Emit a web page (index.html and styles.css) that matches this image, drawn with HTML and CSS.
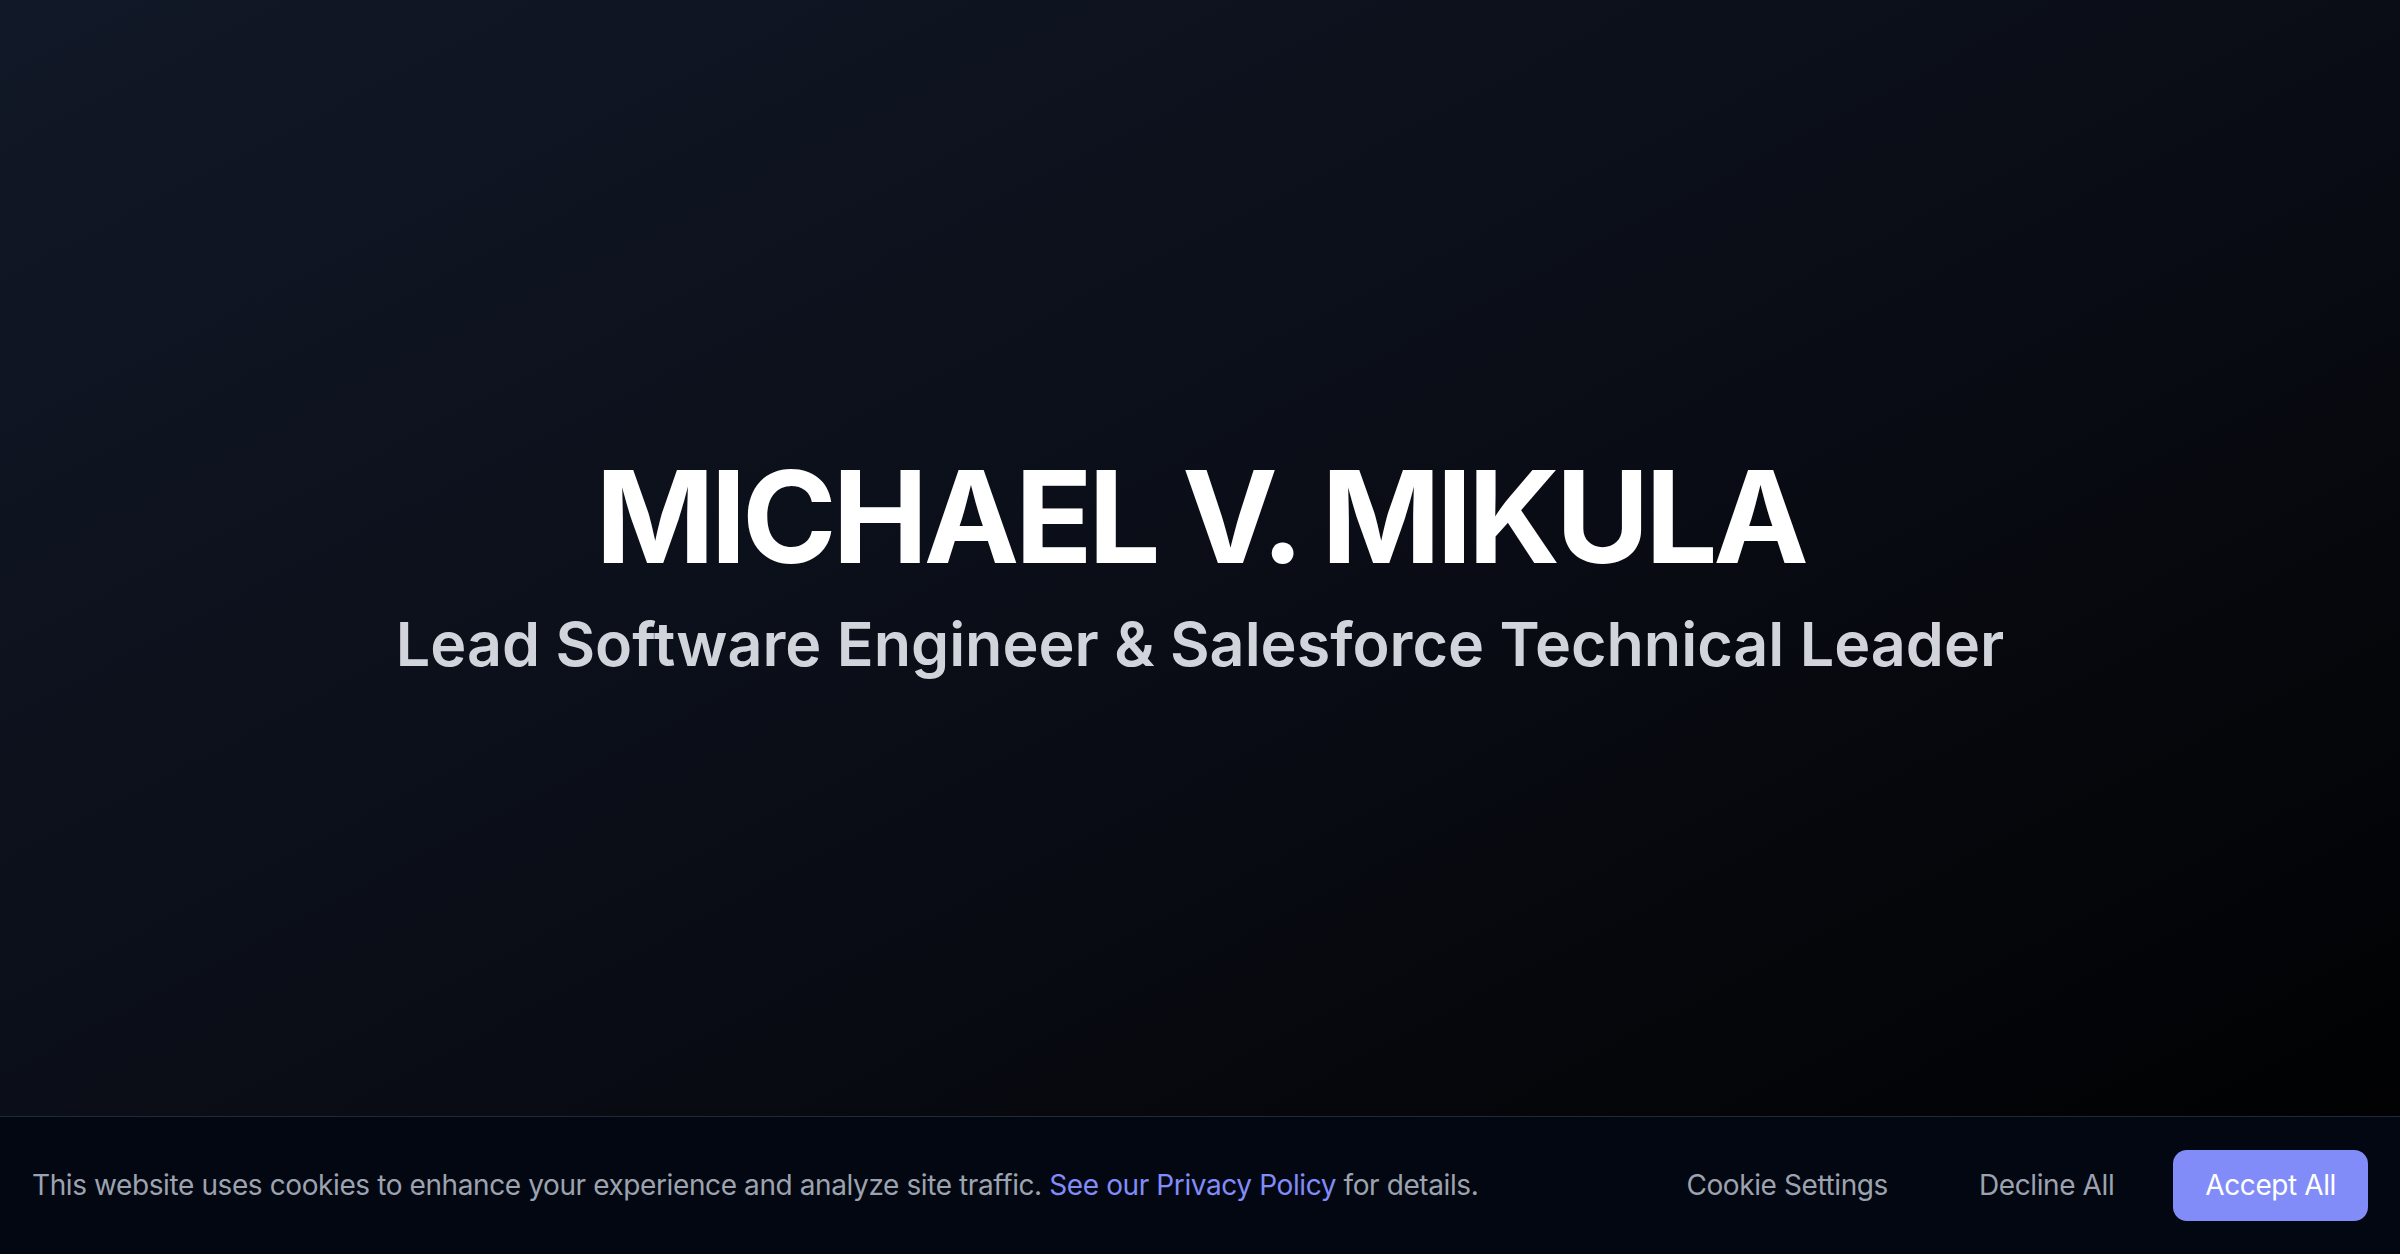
FILE: index.html
```html
<!DOCTYPE html>
<html lang="en">
<head>
<meta charset="utf-8">
<title>Michael V. Mikula</title>
<link rel="stylesheet" href="styles.css">
</head>
<body>
<main class="hero">
  <div class="hero-content">
    <h1 class="hero-title">MICHAEL V. MIKULA</h1>
    <p class="hero-subtitle">Lead Software Engineer &amp; Salesforce Technical Leader</p>
  </div>
</main>
<div class="cookie-banner">
  <p class="cookie-text">This website uses cookies to enhance your experience and analyze site traffic. <a href="#" class="cookie-link">See our Privacy Policy</a> for details.</p>
  <div class="cookie-actions">
    <button class="btn btn-ghost">Cookie Settings</button>
    <button class="btn btn-ghost">Decline All</button>
    <button class="btn btn-primary">Accept All</button>
  </div>
</div>
</body>
</html>
```
FILE: styles.css
```css
* { box-sizing: border-box; }
html, body {
  margin: 0;
  padding: 0;
  height: 100%;
}
body {
  font-family: Inter, "Noto Sans", "Liberation Sans", sans-serif;
  background: #000;
  color: #fff;
  overflow: hidden;
}
.hero {
  height: 100vh;
  display: flex;
  align-items: center;
  justify-content: center;
  padding-bottom: 127px;
  background: linear-gradient(to bottom right, #111827 0%, #0a0d16 50%, #000000 100%);
}
.hero-content {
  display: flex;
  flex-direction: column;
  align-items: center;
  text-align: center;
}
.hero-title {
  margin: 0 0 33px;
  font-size: 128px;
  line-height: 1;
  font-weight: 700;
  letter-spacing: -0.034em;
  color: #ffffff;
}
.hero-subtitle {
  margin: 0;
  font-size: 61px;
  line-height: 1;
  font-weight: 600;
  letter-spacing: 0;
  color: #d1d5db;
}
.cookie-banner {
  position: fixed;
  left: 0;
  right: 0;
  bottom: 0;
  height: 138px;
  display: flex;
  align-items: center;
  justify-content: space-between;
  padding: 0 32px;
  background: #030712;
  border-top: 1px solid #1f2937;
}
.cookie-text {
  margin: 0;
  font-size: 28px;
  line-height: 1.4;
  letter-spacing: -0.4px;
  color: #9ca3af;
}
.cookie-link {
  color: #818cf8;
  text-decoration: none;
}
.cookie-actions {
  display: flex;
  align-items: center;
  gap: 27px;
}
.btn {
  font-family: inherit;
  font-size: 28px;
  line-height: 1.4;
  letter-spacing: -0.4px;
  border: none;
  border-radius: 14px;
  padding: 16px 32px;
  cursor: pointer;
  background: transparent;
}
.btn-ghost {
  color: #9ca3af;
}
.btn-primary {
  background: #818cf8;
  color: #ffffff;
}
```
